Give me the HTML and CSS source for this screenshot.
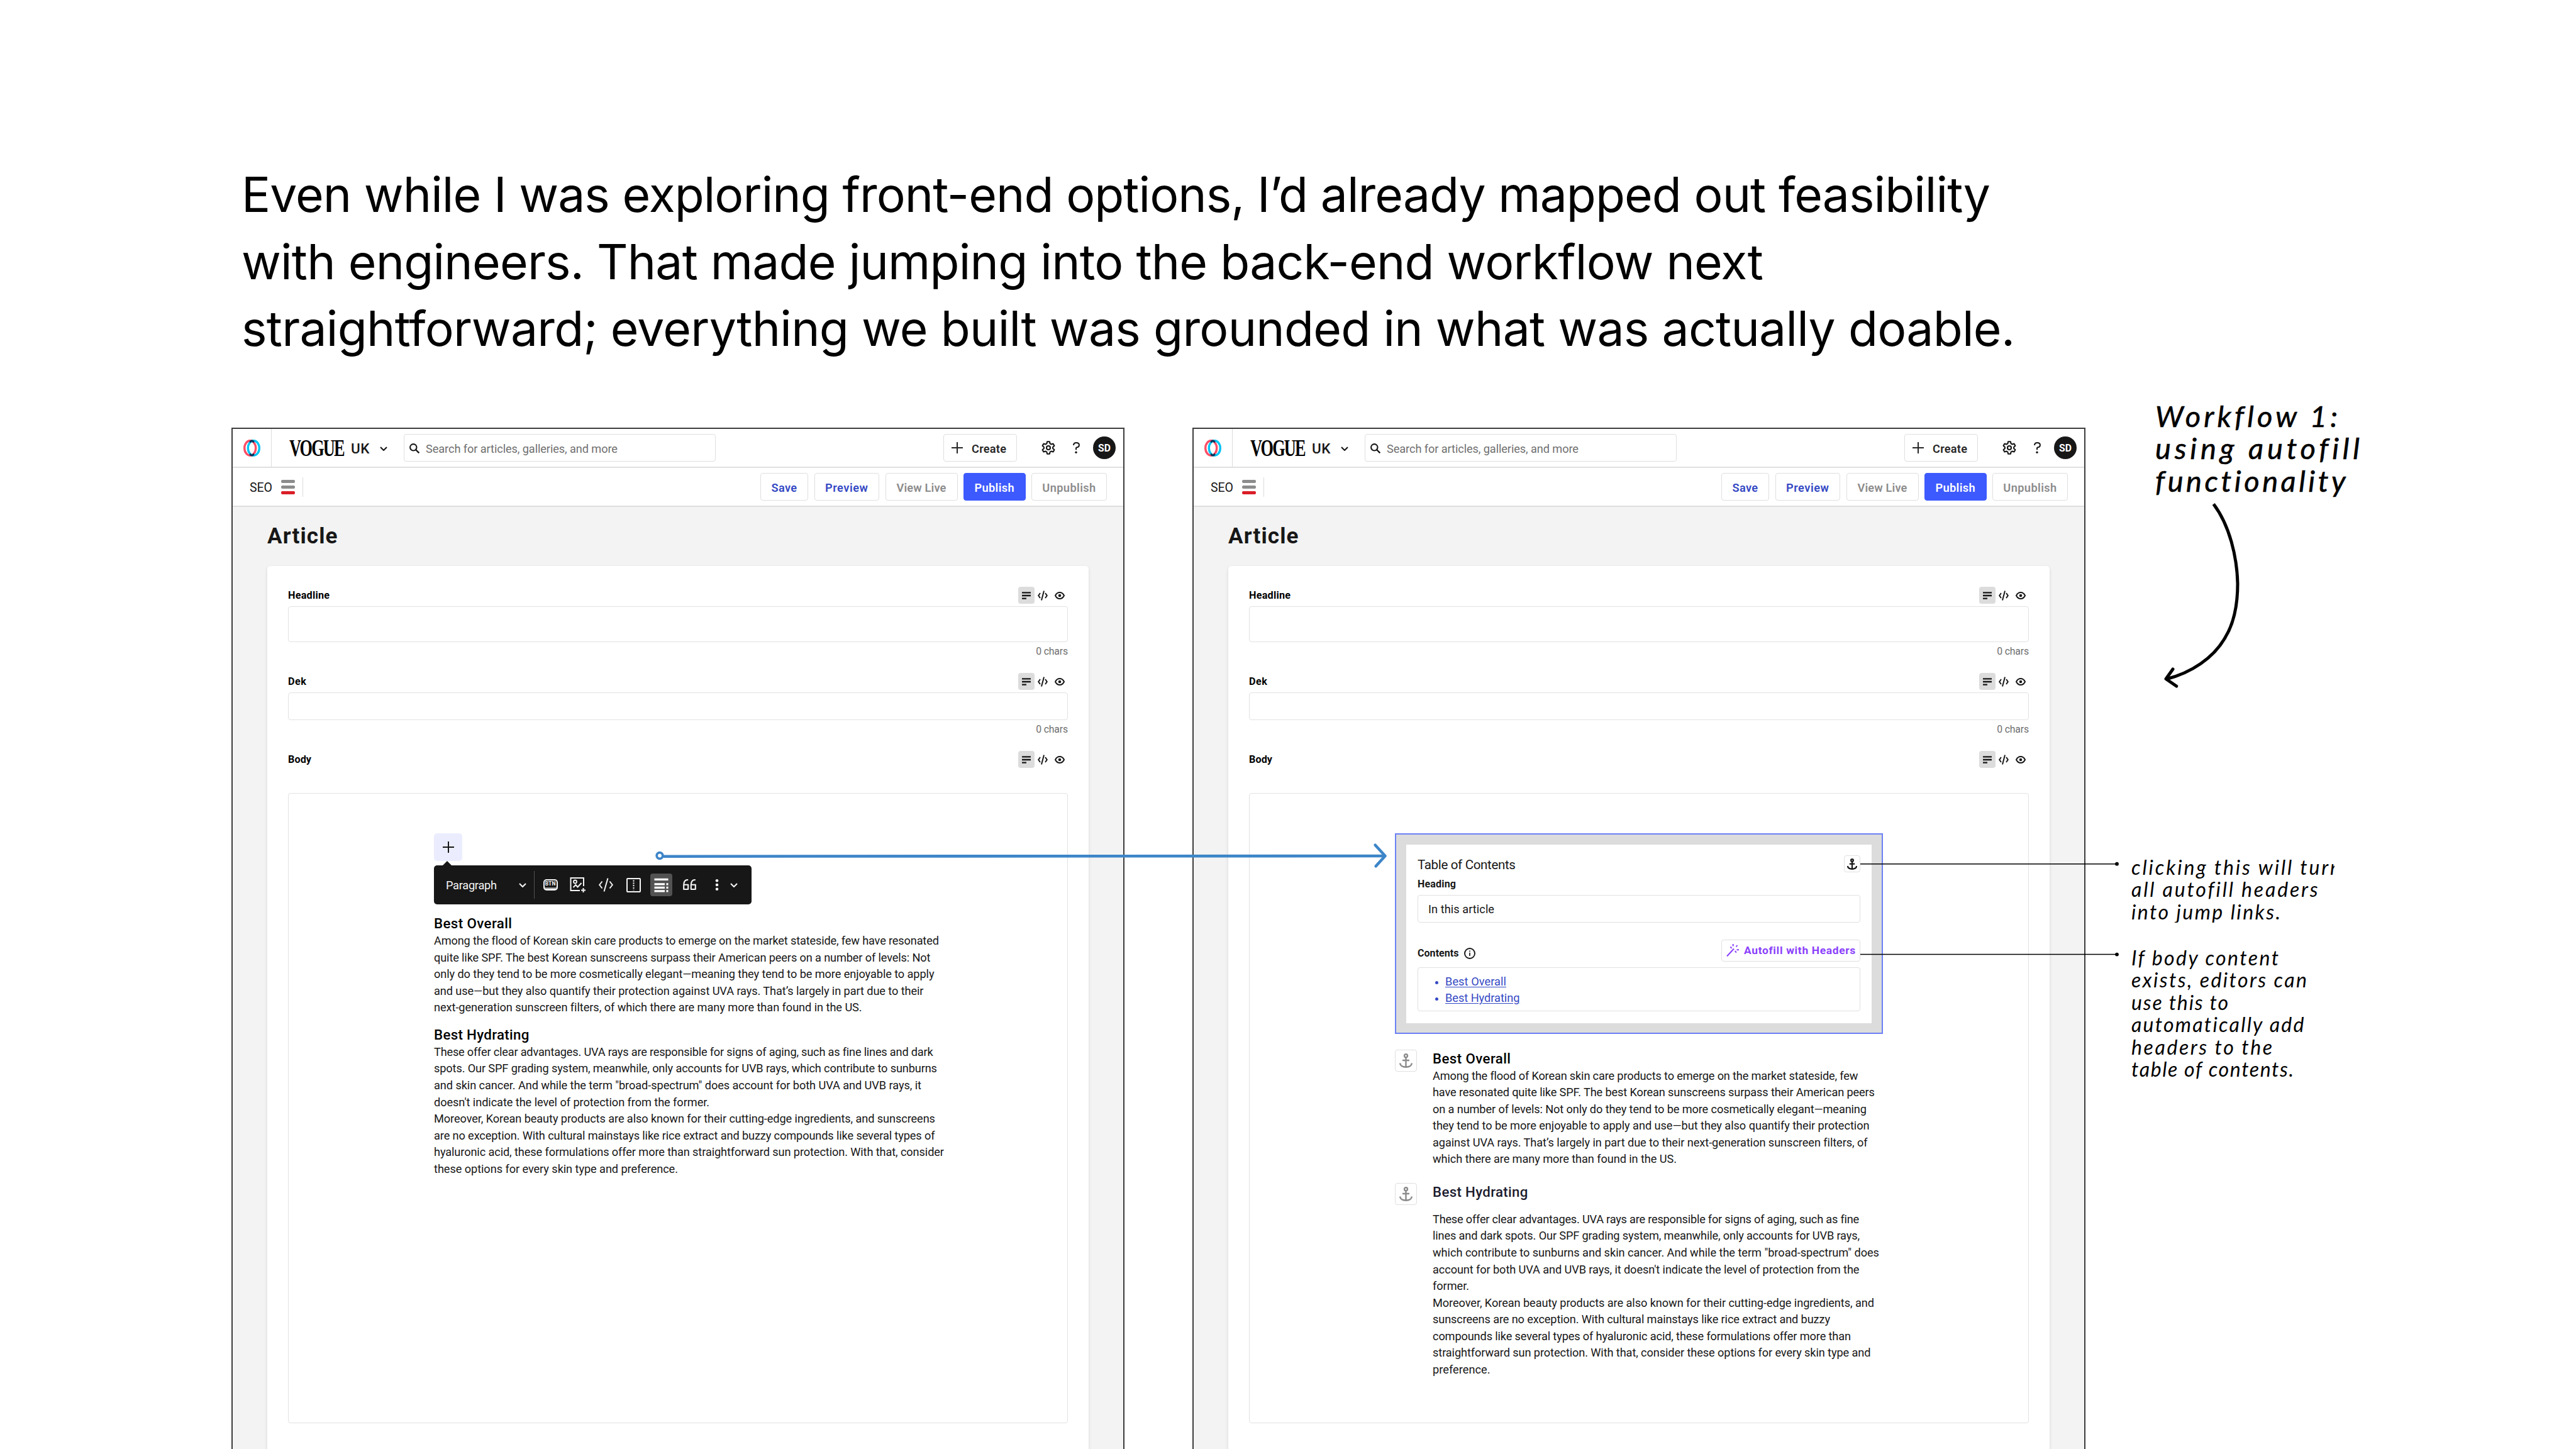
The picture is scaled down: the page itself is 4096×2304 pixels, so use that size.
FILE: index.html
```html
<!DOCTYPE html>
<html lang="en">
<head>
  <meta charset="UTF-8">
  <title>Workflow 1: using autofill functionality</title>
  <link rel="stylesheet" href="styles.css">
</head>
<body>
  <svg class="sprite">
    <symbol id="logo" viewBox="0 0 27 27">
      <g class="logo-rings">
        <ellipse cx="10.7" cy="13.5" rx="9" ry="11.8" stroke="#ff4d66"/>
        <ellipse cx="16.3" cy="13.5" rx="9" ry="11.8" stroke="#00c4f5"/>
      </g>
      <path d="M9.4 2.6Q11.3.8 13.5.3Q15.7.8 17.6 2.6L16.3 5.600Q15 4.300 13.500 3.600Q12 4.300 10.700 5.600Z" fill="#0b3358"/>
      <path d="M9.400 24.400Q11.300 26.200 13.500 26.700Q15.700 26.200 17.600 24.400L16.300 21.400Q15 22.700 13.500 23.400Q12 22.700 10.700 21.400Z" fill="#0b3358"/>
    </symbol>
    <symbol id="chevron" viewBox="0 0 12 7"><path d="M1 1l5 5 5-5" fill="none" stroke="currentColor" stroke-width="2.1"/></symbol>
    <symbol id="search" viewBox="0 0 16 16"><circle cx="6.3" cy="6.3" r="5.2" fill="none" stroke="currentColor" stroke-width="2.1"/><path d="M10 10l5.300 5.300" stroke="currentColor" stroke-width="2.400"/></symbol>
    <symbol id="plus" viewBox="0 0 18 18"><path d="M9 0v18M0 9h18" stroke="currentColor" stroke-width="2"/></symbol>
    <symbol id="gear" viewBox="0 0 22 22">
      <path d="M8.400 4.300L9.100 1.200H12.900L13.600 4.300L15.500 5.400L18.540 4.450L20.440 7.750L18.100 9.900V12.100L20.440 14.250L18.540 17.550L15.500 16.600L13.600 17.700L12.900 20.800H9.100L8.400 17.700L6.500 16.600L3.460 17.550L1.560 14.250L3.900 12.100V9.900L1.560 7.750L3.460 4.450L6.500 5.400Z" fill="none" stroke="currentColor" stroke-width="2.100" stroke-linejoin="round"/>
      <circle cx="11" cy="11" r="3" fill="none" stroke="currentColor" stroke-width="2.100"/>
    </symbol>
    <symbol id="help" viewBox="0 0 11 18"><path d="M1 5Q1.200 1 5.300 1Q9.900 1 9.900 4.600Q9.900 8 6.800 8.200Q5 8.400 5 10V12.200" fill="none" stroke="currentColor" stroke-width="2"/><circle cx="5" cy="16.200" r="1.700" fill="currentColor"/></symbol>
    <symbol id="richtext" viewBox="0 0 14 12"><path d="M0 1.300h14M0 6h14M0 10.600h7" stroke="currentColor" stroke-width="2.300"/></symbol>
    <symbol id="code" viewBox="0 0 23 22"><path d="M5.500 5.500L1.200 11l4.300 5.500M17.500 5.500l4.300 5.500-4.300 5.500M14.500.5L8.500 21.500" fill="none" stroke="currentColor" stroke-width="2"/></symbol>
    <symbol id="code-sm" viewBox="0 0 16 16"><path d="M4 4L1.200 8L4 12M12 4l2.800 4L12 12M10 .5L6 15.500" fill="none" stroke="currentColor" stroke-width="2"/></symbol>
    <symbol id="eye" viewBox="0 0 16 12"><path d="M1 6Q3.500 1 8 1t7 5Q12.500 11 8 11T1 6z" fill="none" stroke="currentColor" stroke-width="2"/><circle cx="8" cy="6" r="2.300" fill="currentColor"/></symbol>
    <symbol id="image" viewBox="0 0 26 26">
      <path d="M22 15V2H1.500v20H16" fill="none" stroke="currentColor" stroke-width="2"/>
      <circle cx="8.500" cy="8" r="2.500" fill="none" stroke="currentColor" stroke-width="1.800"/>
      <path d="M5.500 17l4-4 3 3.500L18.500 10M21.500 18v7M18 21.500h7" fill="none" stroke="currentColor" stroke-width="2"/>
    </symbol>
    <symbol id="columns" viewBox="0 0 23 23"><rect x="1" y="1" width="21" height="21" rx="1" fill="none" stroke="currentColor" stroke-width="2"/><path d="M11.500 3.500v16" stroke="currentColor" stroke-width="2" stroke-dasharray="2.200 1.600"/></symbol>
    <symbol id="toc" viewBox="0 0 23 23"><path d="M.5 2.300h22M.5 9.800H17M.5 15.300H17M.5 20.800H17M19.500 9.800h3M19.500 15.300h3M19.500 20.800h3" stroke="currentColor" stroke-width="3.300"/></symbol>
    <symbol id="quote" viewBox="0 0 21 18"><path d="M8.200 1H7Q1.200 1.500 1.200 9v7h7V8.700H1.200M19.800 1h-1.200Q12.800 1.500 12.800 9v7h7V8.700h-7" fill="none" stroke="currentColor" stroke-width="2.100" stroke-linejoin="round"/></symbol>
    <symbol id="dots" viewBox="0 0 6 18"><circle cx="3" cy="2.300" r="2.300" fill="currentColor"/><circle cx="3" cy="9" r="2.300" fill="currentColor"/><circle cx="3" cy="15.700" r="2.300" fill="currentColor"/></symbol>
    <symbol id="anchor" viewBox="0 0 21 23"><g fill="none" stroke="currentColor"><circle cx="10.500" cy="3.700" r="2.500"/><path d="M10.500 6v15.500M5 11h11M1 15.500Q2 21.700 10.500 21.700T20 15.500"/></g></symbol>
    <symbol id="info" viewBox="0 0 18 18"><circle cx="9" cy="9" r="8" fill="none" stroke="currentColor" stroke-width="1.900"/><path d="M9 7.800V13M9 4.600v1.700" stroke="currentColor" stroke-width="1.700"/></symbol>
    <symbol id="wand" viewBox="0 0 20 20"><path d="M1 19.500L12 7.500M10.700 0v3.500M6.500 4.500l2 2.300M17.500 2l-2 2.500M16.500 9.300H20M13.800 11l2 2.700" fill="none" stroke="currentColor" stroke-width="2"/></symbol>
  </svg>

  <div class="slide">
    <h1 class="intro">
      <span class="line" data-w="2781">Even while I was exploring front-end options, I’d already mapped out feasibility</span>
      <span class="line" data-w="2420">with engineers. That made jumping into the back-end workflow next</span>
      <span class="line" data-w="2820">straightforward; everything we built was grounded in what was actually doable.</span>
    </h1>

    <div class="screens">
      <section class="screen">
        <header class="topbar">
          <div class="brand-cell"><svg class="i-logo"><use href="#logo"/></svg></div>
          <div class="vogue"><span>VOGUE</span></div>
          <span class="market" data-w="29.500">UK</span>
          <svg class="i-chevron"><use href="#chevron"/></svg>
          <div class="search"><svg class="i-search"><use href="#search"/></svg><span data-w="305">Search for articles, galleries, and more</span></div>
          <div class="create"><svg class="i-plus"><use href="#plus"/></svg><span data-w="55">Create</span></div>
          <svg class="i-gear"><use href="#gear"/></svg>
          <svg class="i-help"><use href="#help"/></svg>
          <div class="avatar">SD</div>
        </header>
        <div class="actions">
          <span class="seo" data-w="36">SEO</span>
          <div class="seo-bars"><i></i><i></i><i class="bad"></i></div>
          <div class="split"></div>
          <div class="btn btn-save"><span data-w="40.500">Save</span></div>
          <div class="btn btn-preview"><span data-w="68">Preview</span></div>
          <div class="btn btn-live off"><span data-w="79">View Live</span></div>
          <div class="btn btn-publish primary"><span data-w="63">Publish</span></div>
          <div class="btn btn-unpublish off"><span data-w="85">Unpublish</span></div>
        </div>
        <main class="main">
          <h2 class="page-title"><span data-w="111.500">Article</span></h2>
          <div class="card">
            <div class="label-row"><b data-w="66">Headline</b><div class="views"><div class="on"><svg class="i-rich"><use href="#richtext"/></svg></div><svg class="i-code"><use href="#code-sm"/></svg><svg class="i-eye"><use href="#eye"/></svg></div></div>
            <div class="field tall"></div>
            <div class="chars"><span data-w="51">0 chars</span></div>
            <div class="label-row"><b data-w="29">Dek</b><div class="views"><div class="on"><svg class="i-rich"><use href="#richtext"/></svg></div><svg class="i-code"><use href="#code-sm"/></svg><svg class="i-eye"><use href="#eye"/></svg></div></div>
            <div class="field"></div>
            <div class="chars"><span data-w="51">0 chars</span></div>
            <div class="label-row"><b data-w="37">Body</b><div class="views"><div class="on"><svg class="i-rich"><use href="#richtext"/></svg></div><svg class="i-code"><use href="#code-sm"/></svg><svg class="i-eye"><use href="#eye"/></svg></div></div>
            <div class="editor">
              <div class="add"><svg class="i-plus"><use href="#plus"/></svg></div>
              <div class="toolbar">
                <span class="style-name" data-w="81">Paragraph</span>
                <svg class="i-chevron"><use href="#chevron"/></svg>
                <div class="tool-split"></div>
                <div class="tool"><div class="i-btn"><span>BTN</span></div></div>
                <div class="tool"><svg class="i-image"><use href="#image"/></svg></div>
                <div class="tool"><svg class="i-code-lg"><use href="#code"/></svg></div>
                <div class="tool"><svg class="i-columns"><use href="#columns"/></svg></div>
                <div class="tool active"><svg class="i-toc"><use href="#toc"/></svg></div>
                <div class="tool"><svg class="i-quote"><use href="#quote"/></svg></div>
                <div class="tool"><svg class="i-dots"><use href="#dots"/></svg></div>
                <svg class="i-chevron last"><use href="#chevron"/></svg>
              </div>
              <h3 class="first"><span data-w="124">Best Overall</span></h3>
              <p>
                <span class="line" data-w="802.500">Among the flood of Korean skin care products to emerge on the market stateside, few have resonated</span>
                <span class="line" data-w="789.500">quite like SPF. The best Korean sunscreens surpass their American peers on a number of levels: Not</span>
                <span class="line" data-w="795.500">only do they tend to be more cosmetically elegant—meaning they tend to be more enjoyable to apply</span>
                <span class="line" data-w="778.500">and use—but they also quantify their protection against UVA rays. That’s largely in part due to their</span>
                <span class="line" data-w="680">next-generation sunscreen filters, of which there are many more than found in the US.</span>
              </p>
              <h3><span data-w="151.500">Best Hydrating</span></h3>
              <p>
                <span class="line" data-w="793">These offer clear advantages. UVA rays are responsible for signs of aging, such as fine lines and dark</span>
                <span class="line" data-w="800">spots. Our SPF grading system, meanwhile, only accounts for UVB rays, which contribute to sunburns</span>
                <span class="line" data-w="775">and skin cancer. And while the term "broad-spectrum" does account for both UVA and UVB rays, it</span>
                <span class="line" data-w="438">doesn't indicate the level of protection from the former.</span>
                <span class="line" data-w="797">Moreover, Korean beauty products are also known for their cutting-edge ingredients, and sunscreens</span>
                <span class="line" data-w="796.500">are no exception. With cultural mainstays like rice extract and buzzy compounds like several types of</span>
                <span class="line" data-w="811">hyaluronic acid, these formulations offer more than straightforward sun protection. With that, consider</span>
                <span class="line" data-w="388">these options for every skin type and preference.</span>
              </p>
            </div>
          </div>
        </main>
      </section>

      <section class="screen">
        <header class="topbar">
          <div class="brand-cell"><svg class="i-logo"><use href="#logo"/></svg></div>
          <div class="vogue"><span>VOGUE</span></div>
          <span class="market" data-w="29.500">UK</span>
          <svg class="i-chevron"><use href="#chevron"/></svg>
          <div class="search"><svg class="i-search"><use href="#search"/></svg><span data-w="305">Search for articles, galleries, and more</span></div>
          <div class="create"><svg class="i-plus"><use href="#plus"/></svg><span data-w="55">Create</span></div>
          <svg class="i-gear"><use href="#gear"/></svg>
          <svg class="i-help"><use href="#help"/></svg>
          <div class="avatar">SD</div>
        </header>
        <div class="actions">
          <span class="seo" data-w="36">SEO</span>
          <div class="seo-bars"><i></i><i></i><i class="bad"></i></div>
          <div class="split"></div>
          <div class="btn btn-save"><span data-w="40.500">Save</span></div>
          <div class="btn btn-preview"><span data-w="68">Preview</span></div>
          <div class="btn btn-live off"><span data-w="79">View Live</span></div>
          <div class="btn btn-publish primary"><span data-w="63">Publish</span></div>
          <div class="btn btn-unpublish off"><span data-w="85">Unpublish</span></div>
        </div>
        <main class="main">
          <h2 class="page-title"><span data-w="111.500">Article</span></h2>
          <div class="card">
            <div class="label-row"><b data-w="66">Headline</b><div class="views"><div class="on"><svg class="i-rich"><use href="#richtext"/></svg></div><svg class="i-code"><use href="#code-sm"/></svg><svg class="i-eye"><use href="#eye"/></svg></div></div>
            <div class="field tall"></div>
            <div class="chars"><span data-w="51">0 chars</span></div>
            <div class="label-row"><b data-w="29">Dek</b><div class="views"><div class="on"><svg class="i-rich"><use href="#richtext"/></svg></div><svg class="i-code"><use href="#code-sm"/></svg><svg class="i-eye"><use href="#eye"/></svg></div></div>
            <div class="field"></div>
            <div class="chars"><span data-w="51">0 chars</span></div>
            <div class="label-row"><b data-w="37">Body</b><div class="views"><div class="on"><svg class="i-rich"><use href="#richtext"/></svg></div><svg class="i-code"><use href="#code-sm"/></svg><svg class="i-eye"><use href="#eye"/></svg></div></div>
            <div class="editor">
              <div class="toc-block">
                <div class="toc-card">
                  <div class="toc-head"><span data-w="156">Table of Contents</span><div class="anchor-sm"><svg><use href="#anchor"/></svg></div></div>
                  <b class="toc-label" data-w="61">Heading</b>
                  <div class="toc-input"><span data-w="105">In this article</span></div>
                  <div class="toc-row">
                    <b data-w="65.500">Contents</b>
                    <svg class="i-info"><use href="#info"/></svg>
                    <div class="autofill"><svg class="i-wand"><use href="#wand"/></svg><span data-w="177">Autofill with Headers</span></div>
                  </div>
                  <ul class="toc-list">
                    <li><a data-w="97">Best Overall</a></li>
                    <li><a data-w="118.500">Best Hydrating</a></li>
                  </ul>
                </div>
              </div>
              <div class="block">
                <div class="anchor-lg"><svg><use href="#anchor"/></svg></div>
                <div>
                  <h3 class="flush"><span data-w="124">Best Overall</span></h3>
                  <p>
                    <span class="line" data-w="676">Among the flood of Korean skin care products to emerge on the market stateside, few</span>
                    <span class="line" data-w="703">have resonated quite like SPF. The best Korean sunscreens surpass their American peers</span>
                    <span class="line" data-w="690">on a number of levels: Not only do they tend to be more cosmetically elegant—meaning</span>
                    <span class="line" data-w="694.500">they tend to be more enjoyable to apply and use—but they also quantify their protection</span>
                    <span class="line" data-w="691">against UVA rays. That’s largely in part due to their next-generation sunscreen filters, of</span>
                    <span class="line" data-w="388">which there are many more than found in the US.</span>
                  </p>
                </div>
              </div>
              <div class="block">
                <div class="anchor-lg"><svg><use href="#anchor"/></svg></div>
                <div>
                  <h3 class="flush spaced"><span data-w="151.500">Best Hydrating</span></h3>
                  <p>
                    <span class="line" data-w="677.500">These offer clear advantages. UVA rays are responsible for signs of aging, such as fine</span>
                    <span class="line" data-w="679">lines and dark spots. Our SPF grading system, meanwhile, only accounts for UVB rays,</span>
                    <span class="line" data-w="710">which contribute to sunburns and skin cancer. And while the term "broad-spectrum" does</span>
                    <span class="line" data-w="678.500">account for both UVA and UVB rays, it doesn't indicate the level of protection from the</span>
                    <span class="line" data-w="58">former.</span>
                    <span class="line" data-w="702">Moreover, Korean beauty products are also known for their cutting-edge ingredients, and</span>
                    <span class="line" data-w="632">sunscreens are no exception. With cultural mainstays like rice extract and buzzy</span>
                    <span class="line" data-w="665">compounds like several types of hyaluronic acid, these formulations offer more than</span>
                    <span class="line" data-w="696.500">straightforward sun protection. With that, consider these options for every skin type and</span>
                    <span class="line" data-w="91.500">preference.</span>
                  </p>
                </div>
              </div>
            </div>
          </div>
        </main>
      </section>
    </div>

    <!-- arrows and callout lines over the two screens -->
    <svg class="overlay" viewBox="0 0 4096 2304">
      <g fill="none" stroke="#3d85c8" stroke-width="4.600" stroke-linecap="round" stroke-linejoin="round">
        <circle cx="1049" cy="1360.500" r="4.800" stroke-width="3.800"/>
        <path d="M1055 1361.700L2202 1361"/>
        <path d="M2186.700 1343.800L2202.500 1361L2187.700 1377.300"/>
      </g>
      <g fill="none" stroke="#000" stroke-width="5">
        <path d="M3519.700 801.400C3545 835 3557 885 3558 928C3558 965 3551 993 3538 1014C3520 1046 3484 1070 3444 1080"/>
        <path d="M3455 1064L3444 1079.500L3460.700 1091" stroke-linecap="round" stroke-linejoin="round"/>
      </g>
      <path d="M2958 1373.700H3366M2958 1517.600H3366" stroke="#000" stroke-width="1.500"/>
      <circle cx="3366" cy="1373.700" r="2.900"/>
      <circle cx="3366" cy="1517.600" r="2.900"/>
    </svg>

    <div class="note note-title">
      <span class="line" data-w="290">Workflow 1:</span>
      <span class="line" data-w="324">using autofill</span>
      <span class="line" data-w="302">functionality</span>
    </div>
    <div class="note note-anchor">
      <span class="line" data-w="333">clicking this will turn</span>
      <span class="line" data-w="296">all autofill headers</span>
      <span class="line" data-w="237">into jump links.</span>
    </div>
    <div class="note note-autofill">
      <span class="line" data-w="234">If body content</span>
      <span class="line" data-w="279">exists, editors can</span>
      <span class="line" data-w="154">use this to</span>
      <span class="line" data-w="274">automatically add</span>
      <span class="line" data-w="224">headers to the</span>
      <span class="line" data-w="258">table of contents.</span>
    </div>
  </div>
  <script src="script.js"></script>
</body>
</html>
```
FILE: styles.css
```css
* {
  box-sizing: border-box;
}
body {
  margin: 0;
  background: #fff;
  color: #171717;
  font-family: Roboto, "Liberation Sans", sans-serif;
  font-size: 18.2px;
}
h1, h2, h3, p, ul {
  margin: 0;
  padding: 0;
}
svg {
  display: block;
  flex: none;
}
.sprite {
  position: absolute;
  width: 0;
  height: 0;
}
.slide {
  position: relative;
  width: 4096px;
  height: 2304px;
  padding-top: 257px;
  overflow: hidden;
}
.line {
  display: block;
  width: max-content;
}
[data-w] {
  white-space: nowrap;
}

/* intro copy */
.intro {
  height: 423px;
  padding-left: 384px;
  font: 400 76.8px/106.67px Inter, sans-serif;
  color: #000;
}

/* CMS screens */
.screens {
  display: flex;
  gap: 108px;
  padding-left: 368px;
}
.screen {
  flex: none;
  width: 1420px;
  height: 1700px;
  border: 2px solid #3c3c3c;
  background: #f3f3f3;
}
.topbar {
  display: flex;
  align-items: center;
  height: 62px;
  padding-right: 12px;
  background: #fff;
  border-bottom: 2px solid #e0e0e0;
}
.brand-cell {
  display: flex;
  align-items: center;
  justify-content: center;
  width: 62px;
  height: 60px;
  border-right: 1px solid #dcdcdc;
}
.i-logo {
  width: 27px;
  height: 27px;
}
.logo-rings {
  fill: none;
  stroke-width: 3.4;
}
.vogue {
  width: 88px;
  height: 60px;
  margin-left: 28px;
  font: 700 37px/62px "Liberation Serif", serif;
  letter-spacing: -2.6px;
  color: #000;
}
.vogue span {
  display: inline-block;
  transform: scaleX(0.71);
  transform-origin: 0 50%;
}
.market {
  width: 29px;
  margin: 0 17px 0 10px;
  padding-top: 2px;
  font-size: 22.5px;
  font-weight: 500;
}
.i-chevron {
  width: 12px;
  height: 7px;
}
.topbar .i-chevron {
  margin-top: 3px;
}
.search {
  display: flex;
  align-items: center;
  width: 496px;
  height: 44px;
  margin-left: 26px;
  padding: 2px 0 0 8px;
  border: 1.5px solid #dfdfdf;
  border-radius: 4px;
  color: #6f6f6f;
}
.i-search {
  width: 16px;
  height: 16px;
  margin-right: 10px;
  color: #171717;
}
.create {
  display: flex;
  align-items: center;
  width: 117px;
  height: 44px;
  margin: 0 39px 0 auto;
  padding-left: 12px;
  border: 1.5px solid #dfdfdf;
  border-radius: 4px;
  font-weight: 600;
  color: #262626;
}
.create span {
  padding-top: 2px;
}
.i-plus {
  width: 18px;
  height: 18px;
}
.create .i-plus {
  margin-right: 14px;
}
.i-gear {
  width: 22px;
  height: 22px;
  margin-right: 28px;
}
.i-help {
  width: 11px;
  height: 18px;
  margin-right: 21px;
}
.avatar {
  width: 36px;
  height: 36px;
  border-radius: 50%;
  background: #171717;
  color: #fff;
  font-size: 15.8px;
  font-weight: 700;
  line-height: 37px;
  text-align: center;
}
.actions {
  display: flex;
  align-items: center;
  height: 62px;
  padding: 0 26px 0 27px;
  background: #fff;
  border-bottom: 2px solid #dedede;
}
.seo {
  width: 36px;
  padding-top: 2px;
  font-size: 19.5px;
}
.seo-bars {
  display: flex;
  flex-direction: column;
  gap: 4px;
  margin: 0 12px 0 14px;
}
.seo-bars i {
  width: 22px;
  height: 5px;
  border-radius: 2px;
  background: #8c8c8c;
}
.seo-bars .bad {
  background: #da1e28;
}
.split {
  width: 1px;
  height: 31px;
  margin-right: auto;
  background: #dcdcdc;
}
.btn {
  display: flex;
  align-items: center;
  justify-content: center;
  height: 44px;
  margin-left: 9.5px;
  padding-top: 2px;
  border: 1.5px solid #dfdfdf;
  border-radius: 4px;
  font-weight: 600;
  color: #3449c4;
}
.btn-save { width: 76px; }
.btn-preview { width: 103.5px; }
.btn-live { width: 115px; }
.btn-publish { width: 98.5px; }
.btn-unpublish { width: 120px; }
.btn.off {
  color: #8c8c8c;
}
.btn.primary {
  background: #3d5afe;
  border-color: #3d5afe;
  color: #fff;
}
.main {
  padding: 0 55px;
}
.page-title {
  height: 94px;
  font-size: 35px;
  font-weight: 700;
  line-height: 94px;
}
.card {
  height: 1600px;
  padding: 33px 33px 0;
  background: #fff;
  border-radius: 5px;
  box-shadow: 0 2px 5px rgba(0, 0, 0, 0.12);
}
.label-row {
  display: flex;
  align-items: center;
  justify-content: space-between;
  height: 27px;
  font-size: 16.2px;
  color: #000;
}
.views {
  display: flex;
  align-items: center;
  padding-right: 5px;
  color: #171717;
}
.views .on {
  display: flex;
  align-items: center;
  justify-content: center;
  width: 26px;
  height: 27px;
  border-radius: 4px;
  background: #dcdcdc;
}
.i-rich {
  width: 14px;
  height: 12px;
}
.i-code {
  width: 16px;
  height: 16px;
  margin: 0 11px 0 5px;
}
.i-eye {
  width: 16px;
  height: 12px;
}
.field {
  height: 44px;
  margin-top: 4px;
  border: 1.5px solid #e2e2e2;
  border-radius: 4px;
}
.field.tall {
  height: 57px;
}
.chars {
  display: flex;
  justify-content: flex-end;
  height: 28px;
  margin-bottom: 21px;
  font-size: 15.8px;
  line-height: 29px;
  color: #6f6f6f;
}
.editor {
  height: 1002px;
  margin-top: 40px;
  padding: 63px 0 0 231px;
  border: 1.5px solid #e2e2e2;
  border-radius: 4px;
}

/* block toolbar */
.add {
  display: flex;
  align-items: center;
  justify-content: center;
  width: 45px;
  height: 44px;
  border-radius: 5px;
  background: #ebedff;
}
.toolbar {
  position: relative;
  display: flex;
  align-items: center;
  width: 505px;
  height: 62px;
  margin-top: 7px;
  padding-left: 19px;
  border-radius: 5px;
  background: #171717;
  color: #f4f4f4;
}
.toolbar::before {
  content: "";
  position: absolute;
  left: 14px;
  top: -7px;
  border: 7.5px solid transparent;
  border-top: 0;
  border-bottom: 7px solid #171717;
}
.style-name {
  width: 81px;
  margin-right: 35px;
}
.tool-split {
  width: 1px;
  height: 44px;
  margin: 0 3px 0 12px;
  background: #525252;
}
.tool {
  display: flex;
  align-items: center;
  justify-content: center;
  width: 35px;
  height: 36px;
  margin-left: 4.6px;
  margin-right: 4.6px;
  border-radius: 4px;
}
.tool.active {
  background: #525252;
  color: #fff;
}
.i-btn {
  width: 23px;
  height: 18px;
  border: 2px solid #f4f4f4;
  border-bottom-width: 3px;
  border-radius: 5px;
  box-shadow: inset 0 -2px #8c8c8c;
  font-size: 8.5px;
  font-weight: 700;
  line-height: 11px;
  text-align: center;
}
.i-image {
  width: 26px;
  height: 26px;
}
.i-code-lg {
  width: 23px;
  height: 22px;
}
.i-columns, .i-toc {
  width: 23px;
  height: 23px;
}
.i-quote {
  width: 21px;
  height: 18px;
}
.i-dots {
  width: 6px;
  height: 18px;
}
.i-chevron.last {
  margin-left: -1px;
}

/* article copy */
h3 {
  height: 28px;
  margin: 15px 0 1px;
  font-size: 22.3px;
  font-weight: 500;
  line-height: 28px;
  color: #000;
}
h3.first {
  margin-top: 16px;
}
h3.flush {
  margin-top: 0;
}
h3.spaced {
  margin-bottom: 16.5px;
  color: #1c1c2e;
}
p {
  line-height: 26.57px;
}

/* table of contents block */
.toc-block {
  width: 776px;
  height: 319px;
  padding: 16px;
  border: 2px solid #6b80f5;
  background: #dcdcdc;
}
.toc-card {
  height: 284px;
  padding: 17px 18px 0;
  background: #fff;
}
.toc-head {
  display: flex;
  justify-content: space-between;
  height: 27px;
  font-size: 20.6px;
  line-height: 30px;
}
.anchor-sm, .anchor-lg {
  display: flex;
  align-items: center;
  justify-content: center;
  flex: none;
  width: 26px;
  height: 27px;
  border: 1.5px solid #e0e0e0;
  border-radius: 4px;
}
.anchor-sm svg {
  width: 16px;
  height: 18px;
  stroke-width: 2.9;
}
.toc-label {
  display: block;
  width: max-content;
  height: 35.5px;
  font-size: 16px;
  line-height: 37px;
}
.toc-input {
  height: 44px;
  padding-left: 16px;
  border: 1.5px solid #e0e0e0;
  border-radius: 4px;
  line-height: 43px;
}
.toc-row {
  display: flex;
  height: 35px;
  margin-top: 27px;
  font-size: 16px;
  line-height: 44px;
}
.i-info {
  width: 18px;
  height: 18px;
  margin: 13px 0 0 8px;
}
.autofill {
  display: flex;
  align-items: center;
  width: 221px;
  height: 35px;
  margin-left: auto;
  padding-left: 7px;
  border: 1.5px solid #e0e0e0;
  border-radius: 4px;
  font-size: 17.4px;
  font-weight: 700;
  line-height: 33px;
  color: #8a3ffc;
}
.i-wand {
  width: 20px;
  height: 20px;
  margin-right: 8px;
}
.toc-list {
  height: 70px;
  margin-top: 9px;
  padding: 9px 0 0 43px;
  border: 1.5px solid #e0e0e0;
  border-radius: 4px;
  line-height: 26.5px;
  color: #3449c4;
}
.toc-list li::marker {
  font-size: 15px;
}
.toc-list a {
  text-decoration: underline;
  text-underline-offset: 2px;
}
.block {
  display: flex;
  gap: 25px;
  margin-top: 24.5px;
}
.anchor-lg {
  width: 35px;
  height: 35px;
  color: #8c8c8c;
}
.anchor-lg svg {
  width: 21px;
  height: 23px;
  stroke-width: 2.4;
}

/* callouts */
.overlay {
  position: absolute;
  inset: 0;
  width: 4096px;
  height: 2304px;
}
.note {
  position: absolute;
  color: #000;
  font-family: Lato, sans-serif;
  font-style: italic;
}
.note-title {
  left: 3427px;
  top: 636px;
  font-size: 47px;
  line-height: 51.4px;
  -webkit-text-stroke: 0.6px #000;
}
.note-anchor, .note-autofill {
  left: 3389px;
  top: 1361px;
  font-size: 32px;
  line-height: 35.4px;
}
.note-anchor {
  width: 323px;
  overflow: hidden;
}
.note-autofill {
  top: 1505px;
}
```
FILE: script.js
```js
// Track each line out to the width given in data-w
document.querySelectorAll('[data-w]').forEach(function(el) {
  const range = document.createRange();
  range.selectNodeContents(el);
  const natural = range.getBoundingClientRect().width;
  const gaps = el.textContent.length - 1;
  el.style.letterSpacing = (el.dataset.w - natural) / gaps + 'px';
});
```
